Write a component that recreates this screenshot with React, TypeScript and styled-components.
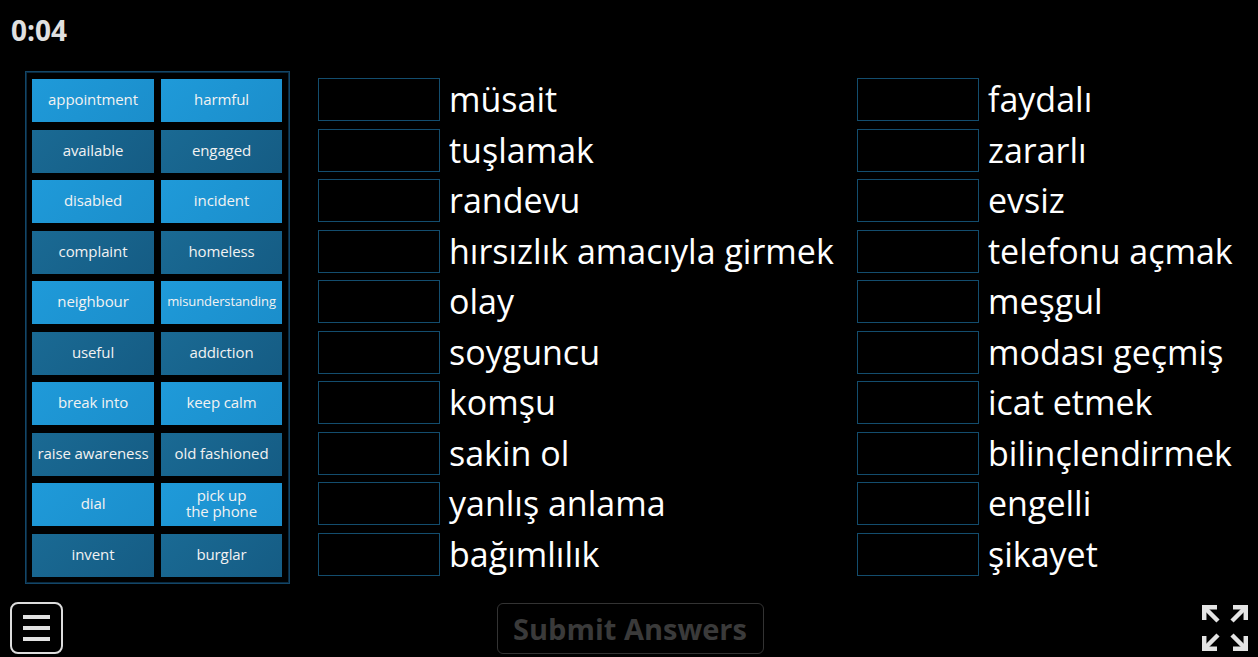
import * as React from 'react'
import styled, { createGlobalStyle } from 'styled-components'

const GlobalStyle = createGlobalStyle`
  html, body {
    margin: 0;
    padding: 0;
    background: #000;
  }
  body {
    font-family: 'Open Sans', 'DejaVu Sans', sans-serif;
  }
`

const bank: string[][] = [
  ['appointment', 'harmful'],
  ['available', 'engaged'],
  ['disabled', 'incident'],
  ['complaint', 'homeless'],
  ['neighbour', 'misunderstanding'],
  ['useful', 'addiction'],
  ['break into', 'keep calm'],
  ['raise awareness', 'old fashioned'],
  ['dial', 'pick up\nthe phone'],
  ['invent', 'burglar']
]

const leftWords = [
  'müsait',
  'tuşlamak',
  'randevu',
  'hırsızlık amacıyla girmek',
  'olay',
  'soyguncu',
  'komşu',
  'sakin ol',
  'yanlış anlama',
  'bağımlılık'
]

const rightWords = [
  'faydalı',
  'zararlı',
  'evsiz',
  'telefonu açmak',
  'meşgul',
  'modası geçmiş',
  'icat etmek',
  'bilinçlendirmek',
  'engelli',
  'şikayet'
]

const Page = styled.div`
  width: 1258px;
  height: 657px;
  background: #000;
  display: flex;
  flex-direction: column;
  overflow: hidden;
`

const Header = styled.div`
  height: 71px;
  padding: 12px 0 0 11px;
  box-sizing: border-box;
`

const Timer = styled.div`
  color: #e0e0e0;
  font-size: 28px;
  font-weight: 700;
  line-height: 36px;
`

const Main = styled.div`
  display: flex;
  padding-left: 25px;
  height: 513px;
`

const Bank = styled.div`
  width: 265px;
  height: 513px;
  box-sizing: border-box;
  border: 1px solid #134668;
  box-shadow: inset 0 0 0 1px #0a2a40;
  padding: 7px 6px 6px 6px;
  display: grid;
  grid-template-columns: 122px 121px;
  grid-auto-rows: 43px;
  column-gap: 7px;
  row-gap: 7.5px;
`

const Tile = styled.div<{ $light: boolean; $small?: boolean }>`
  display: flex;
  align-items: center;
  justify-content: center;
  text-align: center;
  white-space: pre-line;
  color: #f2f2f2;
  font-size: ${p => (p.$small ? 13 : 15)}px;
  line-height: 16px;
  letter-spacing: -0.1px;
  padding-bottom: 3px;
  box-sizing: border-box;
  background: ${p =>
    p.$light
      ? 'linear-gradient(135deg, #1f9ad9 0%, #1b8ecb 100%)'
      : 'linear-gradient(135deg, #1a6a94 0%, #155c84 100%)'};
`

const DropColumn = styled.div<{ $width?: number }>`
  ${p => (p.$width ? `width: ${p.$width}px; flex: none;` : 'flex: 1;')}
  padding-top: 7px;
  display: flex;
  flex-direction: column;
  gap: 7.5px;
`

const Row = styled.div`
  display: flex;
  align-items: center;
  height: 43px;
  gap: 9px;
`

const Slot = styled.div`
  width: 122px;
  height: 43px;
  box-sizing: border-box;
  border: 1px solid #134d6e;
  flex: none;
`

const Word = styled.div`
  color: #fff;
  font-size: 34px;
  line-height: 40px;
  white-space: nowrap;
  padding-bottom: 1px;
`

const Footer = styled.div`
  flex: 1;
  display: flex;
  align-items: flex-end;
  justify-content: space-between;
  padding: 0 10px 3px 10px;
`

const MenuButton = styled.div`
  width: 53px;
  height: 52px;
  box-sizing: border-box;
  border: 2px solid #dcdcdc;
  border-radius: 8px;
  display: flex;
  flex-direction: column;
  align-items: center;
  justify-content: center;
  gap: 7px;
`

const Bar = styled.div`
  width: 27px;
  height: 4px;
  background: #e2e2e2;
`

const Submit = styled.div`
  width: 267px;
  height: 51px;
  box-sizing: border-box;
  border: 1px solid #333;
  border-radius: 6px;
  color: #3a3a3a;
  font-size: 29px;
  font-weight: 700;
  display: flex;
  align-items: center;
  justify-content: center;
  margin-left: -5px;
`

const FullScreen = styled.div`
  width: 46px;
  height: 46px;
  margin-bottom: 3px;
`

const FullScreenIcon = () => (
  <svg width="46" height="46" viewBox="0 0 46 46">
    <g stroke="#e4e4e4" strokeWidth="4.5" fill="none" strokeLinecap="butt" strokeLinejoin="miter">
      <path d="M2.2 15 V2.2 H15" />
      <path d="M3 3 L16 16" />
      <path d="M31 2.2 H43.8 V15" />
      <path d="M43 3 L30 16" />
      <path d="M2.2 31 V43.8 H15" />
      <path d="M3 43 L16 30" />
      <path d="M31 43.8 H43.8 V31" />
      <path d="M43 43 L30 30" />
    </g>
  </svg>
)

export default function App() {
  return (
    <Page>
      <GlobalStyle />
      <Header>
        <Timer>0:04</Timer>
      </Header>
      <Main>
        <Bank>
          {bank.map((pair, r) =>
            pair.map(w => (
              <Tile key={w} $light={r % 2 === 0} $small={w === 'misunderstanding'}>
                {w}
              </Tile>
            ))
          )}
        </Bank>
        <DropColumn $width={539} style={{ marginLeft: 28 }}>
          {leftWords.map(w => (
            <Row key={w}>
              <Slot />
              <Word>{w}</Word>
            </Row>
          ))}
        </DropColumn>
        <DropColumn>
          {rightWords.map(w => (
            <Row key={w}>
              <Slot />
              <Word>{w}</Word>
            </Row>
          ))}
        </DropColumn>
      </Main>
      <Footer>
        <MenuButton>
          <Bar />
          <Bar />
          <Bar />
        </MenuButton>
        <Submit>Submit Answers</Submit>
        <FullScreen>
          <FullScreenIcon />
        </FullScreen>
      </Footer>
    </Page>
  )
}
